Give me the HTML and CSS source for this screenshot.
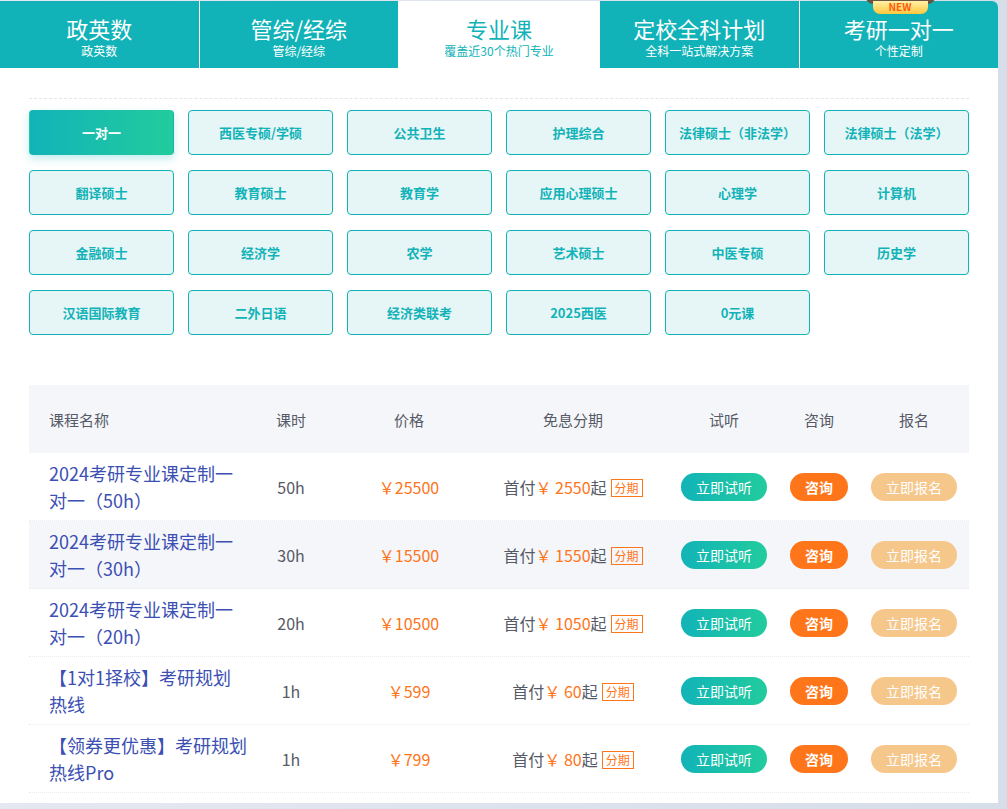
FILE: index.html
```html
<!DOCTYPE html>
<html>

<head>
  <title>专业课</title>
  <link rel="stylesheet" href="styles.css">
</head>

<body>
  <div class="page">
    <div class="tabs">
      <div class="tab">
        <div class="tab-title">政英数</div>
        <div class="tab-sub">政英数</div>
      </div>
      <div class="tab">
        <div class="tab-title">管综/经综</div>
        <div class="tab-sub">管综/经综</div>
      </div>
      <div class="tab active">
        <div class="tab-title">专业课</div>
        <div class="tab-sub">覆盖近30个热门专业</div>
      </div>
      <div class="tab">
        <div class="tab-title">定校全科计划</div>
        <div class="tab-sub">全科一站式解决方案</div>
      </div>
      <div class="tab last">
        <span class="badge">NEW</span>
        <div class="tab-title">考研一对一</div>
        <div class="tab-sub">个性定制</div>
      </div>
    </div>

    <div class="content">
      <div class="subjects">
        <a href="#" class="subject active">一对一</a>
        <a href="#" class="subject">西医专硕/学硕</a>
        <a href="#" class="subject">公共卫生</a>
        <a href="#" class="subject">护理综合</a>
        <a href="#" class="subject">法律硕士（非法学）</a>
        <a href="#" class="subject">法律硕士（法学）</a>
        <a href="#" class="subject">翻译硕士</a>
        <a href="#" class="subject">教育硕士</a>
        <a href="#" class="subject">教育学</a>
        <a href="#" class="subject">应用心理硕士</a>
        <a href="#" class="subject">心理学</a>
        <a href="#" class="subject">计算机</a>
        <a href="#" class="subject">金融硕士</a>
        <a href="#" class="subject">经济学</a>
        <a href="#" class="subject">农学</a>
        <a href="#" class="subject">艺术硕士</a>
        <a href="#" class="subject">中医专硕</a>
        <a href="#" class="subject">历史学</a>
        <a href="#" class="subject">汉语国际教育</a>
        <a href="#" class="subject">二外日语</a>
        <a href="#" class="subject">经济类联考</a>
        <a href="#" class="subject">2025西医</a>
        <a href="#" class="subject">0元课</a>
      </div>

      <div class="course-table">
        <div class="row head">
          <div class="cell name">课程名称</div>
          <div class="cell">课时</div>
          <div class="cell">价格</div>
          <div class="cell">免息分期</div>
          <div class="cell">试听</div>
          <div class="cell">咨询</div>
          <div class="cell sign">报名</div>
        </div>

        <div class="row">
          <div class="cell name"><a href="#">2024考研专业课定制一对一（50h）</a></div>
          <div class="cell">50h</div>
          <div class="cell price">￥25500</div>
          <div class="cell">首付<span class="price">￥ 2550</span>起<span class="tag">分期</span></div>
          <div class="cell"><a href="#" class="btn btn-try">立即试听</a></div>
          <div class="cell"><a href="#" class="btn btn-ask">咨询</a></div>
          <div class="cell sign"><a href="#" class="btn btn-join">立即报名</a></div>
        </div>

        <div class="row shaded">
          <div class="cell name"><a href="#">2024考研专业课定制一对一（30h）</a></div>
          <div class="cell">30h</div>
          <div class="cell price">￥15500</div>
          <div class="cell">首付<span class="price">￥ 1550</span>起<span class="tag">分期</span></div>
          <div class="cell"><a href="#" class="btn btn-try">立即试听</a></div>
          <div class="cell"><a href="#" class="btn btn-ask">咨询</a></div>
          <div class="cell sign"><a href="#" class="btn btn-join">立即报名</a></div>
        </div>

        <div class="row">
          <div class="cell name"><a href="#">2024考研专业课定制一对一（20h）</a></div>
          <div class="cell">20h</div>
          <div class="cell price">￥10500</div>
          <div class="cell">首付<span class="price">￥ 1050</span>起<span class="tag">分期</span></div>
          <div class="cell"><a href="#" class="btn btn-try">立即试听</a></div>
          <div class="cell"><a href="#" class="btn btn-ask">咨询</a></div>
          <div class="cell sign"><a href="#" class="btn btn-join">立即报名</a></div>
        </div>

        <div class="row">
          <div class="cell name"><a href="#">【1对1择校】考研规划热线</a></div>
          <div class="cell">1h</div>
          <div class="cell price">￥599</div>
          <div class="cell">首付<span class="price">￥ 60</span>起<span class="tag">分期</span></div>
          <div class="cell"><a href="#" class="btn btn-try">立即试听</a></div>
          <div class="cell"><a href="#" class="btn btn-ask">咨询</a></div>
          <div class="cell sign"><a href="#" class="btn btn-join">立即报名</a></div>
        </div>

        <div class="row">
          <div class="cell name"><a href="#">【领券更优惠】考研规划热线Pro</a></div>
          <div class="cell">1h</div>
          <div class="cell price">￥799</div>
          <div class="cell">首付<span class="price">￥ 80</span>起<span class="tag">分期</span></div>
          <div class="cell"><a href="#" class="btn btn-try">立即试听</a></div>
          <div class="cell"><a href="#" class="btn btn-ask">咨询</a></div>
          <div class="cell sign"><a href="#" class="btn btn-join">立即报名</a></div>
        </div>
      </div>
    </div>
  </div>
</body>

</html>
```

FILE: styles.css
```css
:root {
  --teal: #12b3b8;
  --green: #22cc9d;
  --orange: #ff7519;
  --light-orange: #f6c78b;
  --text: #555a66;
  --link: #3c4fb3;
  --shade: #f5f6fa;
}

body {
  margin: 0;
  padding: 1px 0 0 0;
  background: linear-gradient(90deg, #e4e8f1, #d6deea);
  font-family: "Noto Sans CJK SC", "Open Sans", sans-serif;
}

a {
  text-decoration: none;
}

.page {
  width: 998px;
  height: 802px;
  background-color: #fff;
  border-top-right-radius: 6px;
}

/* Top tabs */
.tabs {
  display: flex;
  gap: 1px;
  height: 67px;
}

.tab {
  position: relative;
  flex: 1;
  background-color: var(--teal);
  color: #fff;
  display: flex;
  flex-direction: column;
  align-items: center;
  padding-top: 12px;
}

.tab.active {
  flex: 0 0 200px;
  background-color: #fff;
  color: var(--teal);
}

.tab.last {
  border-top-right-radius: 6px;
}

.tab-title {
  font-size: 22px;
  line-height: 30px;
}

.tab-sub {
  font-size: 12px;
  line-height: 16px;
}

.badge {
  position: absolute;
  top: 0;
  left: 73px;
  width: 55px;
  height: 13px;
  border-radius: 0 0 7px 7px;
  background: linear-gradient(#fff1a8, #ffc83c);
  color: #ff5a10;
  font-size: 10px;
  font-weight: bold;
  line-height: 12px;
  text-align: center;
  box-shadow: -7px -10px 0 #6b5540, 7px -10px 0 #6b5540;
}

/* Subject buttons */
.content {
  padding: 30px 29px 0 29px;
}

.subjects {
  display: grid;
  grid-template-columns: repeat(6, 145px);
  column-gap: 14px;
  row-gap: 15px;
  border-top: 1px dashed #e6e6e6;
  padding-top: 11px;
}

.subject {
  height: 43px;
  display: flex;
  align-items: center;
  justify-content: center;
  border: 1px solid var(--teal);
  border-radius: 4px;
  background-color: #e6f6f6;
  color: var(--teal);
  font-size: 13px;
  font-weight: bold;
}

.subject.active {
  border-color: transparent;
  background: linear-gradient(90deg, var(--teal), var(--green));
  color: #fff;
  box-shadow: 0 4px 8px rgba(18, 179, 184, 0.25);
}

/* Course table */
.course-table {
  margin-top: 50px;
  width: 940px;
}

.row {
  display: grid;
  grid-template-columns: 221px 82px 154px 174px 128px 62px 119px;
  align-items: center;
  height: 68px;
  border-bottom: 1px dotted #e9e9ee;
  box-sizing: border-box;
  font-size: 16px;
  color: var(--text);
}

.row.head {
  background-color: var(--shade);
  border-bottom: none;
  font-size: 15px;
}

.row.shaded {
  background-color: var(--shade);
}

.cell {
  text-align: center;
  white-space: nowrap;
}

.cell.name {
  text-align: left;
  padding-left: 20px;
  white-space: normal;
}

.cell.name a {
  display: block;
  width: 199px;
  color: var(--link);
  font-size: 18px;
  line-height: 27px;
}

.cell.sign {
  padding-left: 9px;
}

.price {
  color: var(--orange);
}

.tag {
  display: inline-block;
  margin-left: 4px;
  padding: 0 3px;
  border: 1px solid var(--orange);
  color: var(--orange);
  font-size: 12px;
  line-height: 16px;
  vertical-align: 1px;
}

.btn {
  display: inline-block;
  height: 28px;
  line-height: 28px;
  border-radius: 14px;
  color: #fff;
  font-size: 14px;
}

.btn-try {
  width: 86px;
  background: linear-gradient(90deg, var(--teal), var(--green));
}

.btn-ask {
  width: 58px;
  background-color: var(--orange);
  font-weight: bold;
}

.btn-join {
  width: 86px;
  background-color: var(--light-orange);
}
```
